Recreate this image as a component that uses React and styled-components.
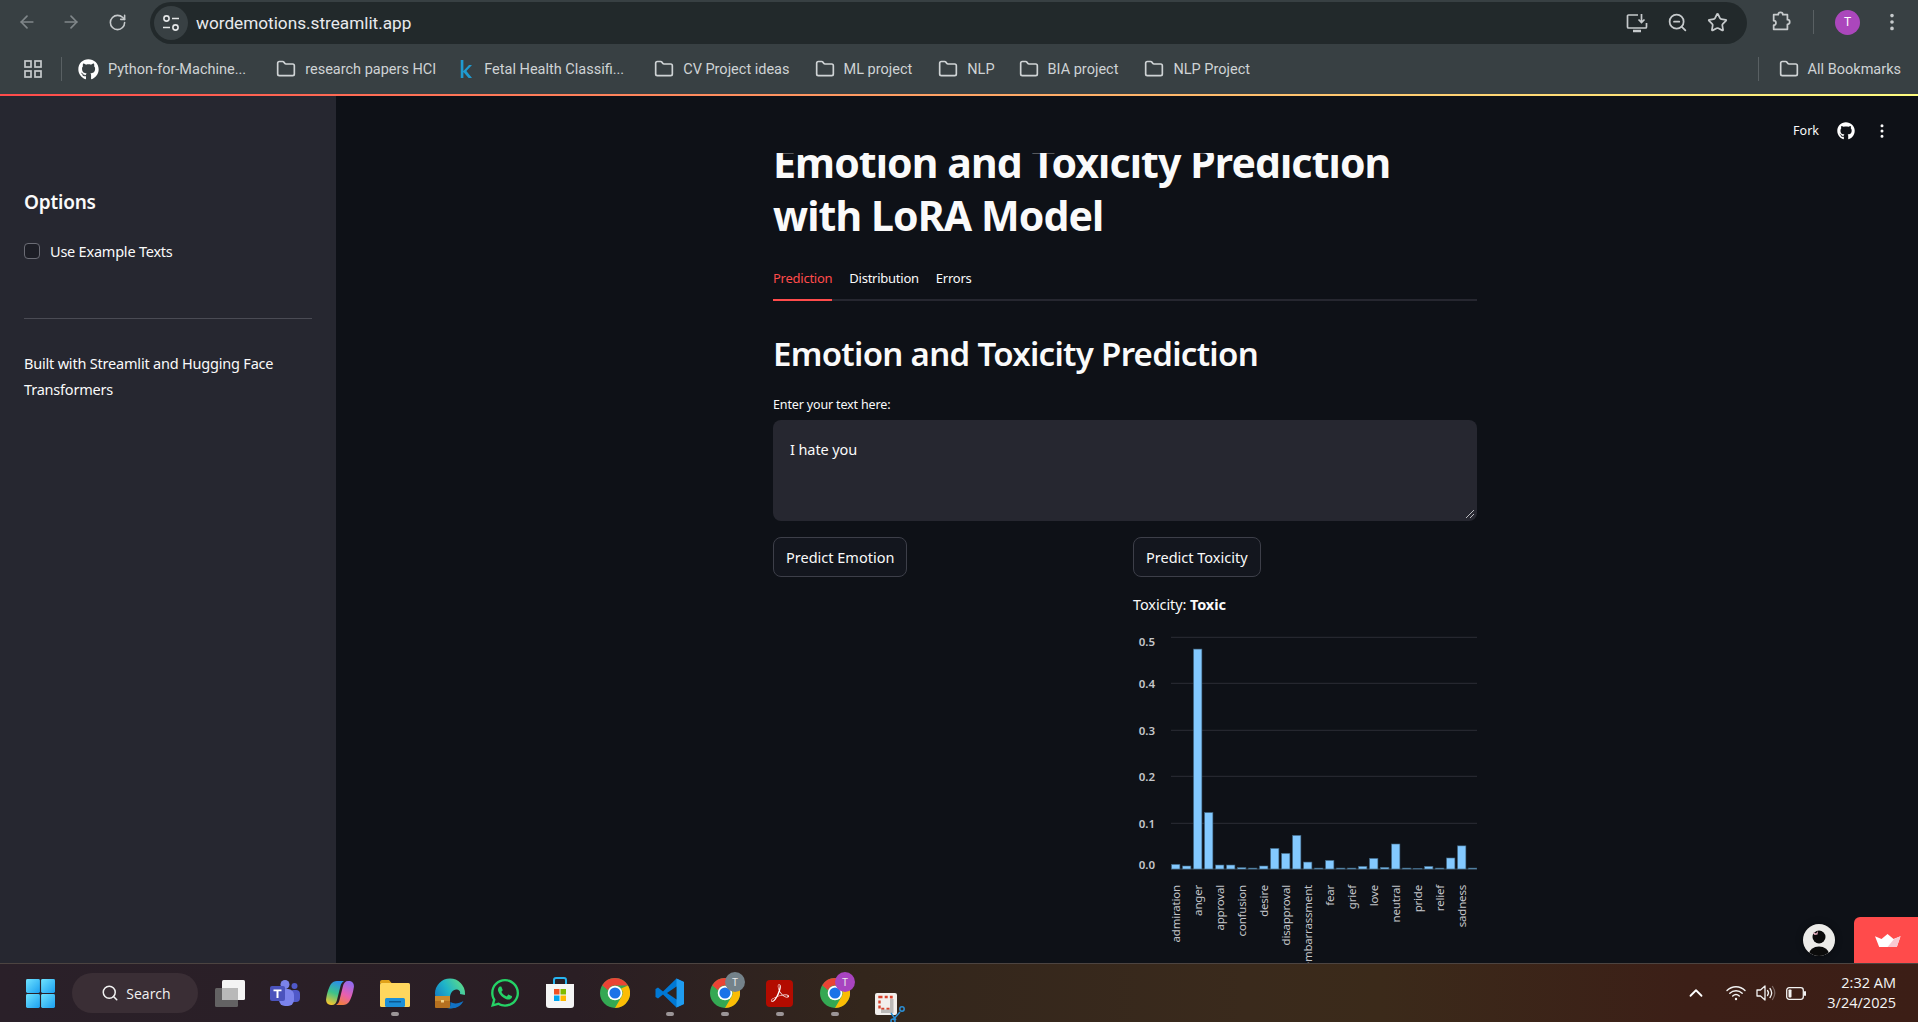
import React from "react";
import styled, { createGlobalStyle } from "styled-components";
import {
  ArrowLeft,
  ArrowRight,
  RotateCw,
  Star,
  ZoomOut,
  Folder,
  MoreVertical,
  ChevronUp,
  Search,
} from "lucide-react";
import { FaGithub, FaWhatsapp } from "react-icons/fa";
import { SiAdobeacrobatreader } from "react-icons/si";

const FONT = `"Noto Sans", "Open Sans", sans-serif`;

const GlobalStyle = createGlobalStyle`
  html, body {
    margin: 0;
    padding: 0;
    height: 100%;
    overflow: hidden;
    background: #0e1117;
    font-family: ${FONT};
  }
  * { box-sizing: border-box; }
`;

const Screen = styled.div`
  width: 1918px;
  height: 1022px;
  display: flex;
  flex-direction: column;
  overflow: hidden;
`;

/* browser chrome */
const Toolbar = styled.div`
  height: 44px;
  background: #384043;
  display: flex;
  align-items: center;
  padding-left: 15px;
  flex-shrink: 0;
`;

const NavButton = styled.div`
  width: 24px;
  height: 24px;
  margin-right: ${(p) => p.$gap || 20}px;
  display: flex;
  align-items: center;
  justify-content: center;
  color: ${(p) => (p.$dim ? "#80878a" : "#c6cacc")};
`;

const Omnibox = styled.div`
  width: 1597px;
  height: 42px;
  margin-left: 1px;
  margin-top: 1px;
  border-radius: 21px;
  background: #22292b;
  display: flex;
  align-items: center;
  padding: 0 10px 0 4px;
`;

const TuneBadge = styled.div`
  width: 34px;
  height: 34px;
  border-radius: 50%;
  background: #384043;
  display: flex;
  align-items: center;
  justify-content: center;
  margin-right: 8px;
  color: #e4e6e7;
`;

const Url = styled.span`
  font-family: "Roboto", sans-serif;
  font-size: 17.2px;
  color: #e8eaed;
  flex: 1;
`;

const OmniIcon = styled.div`
  width: 40px;
  display: flex;
  justify-content: center;
  align-items: center;
  color: #c6cacc;
`;

const ToolRight = styled.div`
  display: flex;
  align-items: center;
  margin-left: 23px;
  color: #c6cacc;
`;

const Divider = styled.div`
  width: 1px;
  height: 24px;
  background: #596063;
  margin: 0 ${(p) => p.$space || 21}px;
`;

const Avatar = styled.div`
  width: 25px;
  height: 25px;
  border-radius: 50%;
  background: #ab47bc;
  color: #fff;
  font-size: 12px;
  display: flex;
  align-items: center;
  justify-content: center;
  font-family: "Roboto", sans-serif;
`;

const MenuButton = styled.div`
  display: flex;
  margin-left: 21px;
`;

const BookmarkBar = styled.div`
  height: 50px;
  background: #384043;
  display: flex;
  align-items: center;
  padding-left: 23px;
  flex-shrink: 0;
  color: #c9cdcf;
`;

const Bookmark = styled.div`
  display: flex;
  align-items: center;
  gap: ${(p) => p.$iconGap || 9}px;
  margin-left: ${(p) => p.$lead || 0}px;
  margin-right: ${(p) => p.$after || 0}px;
  font-family: "Roboto", sans-serif;
  font-size: 14.5px;
  color: #cfd3d5;
  white-space: nowrap;
`;

const BookmarkSpacer = styled.div`
  flex: 1;
`;

const Decoration = styled.div`
  height: 2px;
  flex-shrink: 0;
  background: linear-gradient(90deg, #ff4b4b, #fffd80);
`;

/* streamlit app */
const AppBody = styled.div`
  flex: 1;
  min-height: 0;
  display: flex;
  position: relative;
`;

const Sidebar = styled.aside`
  width: 336px;
  flex-shrink: 0;
  background: #262730;
  color: #fafafa;
  padding: 92px 24px 0;
`;

const SideTitle = styled.h2`
  margin: 0;
  font-size: 19px;
  font-weight: 600;
  line-height: 28px;
  letter-spacing: -0.2px;
`;

const CheckRow = styled.label`
  display: flex;
  align-items: center;
  gap: 10px;
  margin-top: 25px;
  font-size: 14.5px;
  line-height: 20px;
  letter-spacing: -0.22px;
`;

const CheckBox = styled.span`
  width: 16px;
  height: 16px;
  border-radius: 4px;
  border: 1px solid #6b6c75;
  background: #1d1e26;
`;

const SideRule = styled.hr`
  border: 0;
  border-top: 1px solid #4a4b54;
  margin: 57px 0 31px;
`;

const SideNote = styled.p`
  margin: 0;
  font-size: 14.5px;
  line-height: 26px;
  letter-spacing: -0.2px;
`;

const Main = styled.main`
  flex: 1;
  min-width: 0;
  position: relative;
  overflow: hidden;
  background: #0e1117;
  color: #fafafa;
  padding: 40px 441px 0 437px;
`;

const Header = styled.header`
  position: absolute;
  left: 0;
  right: 0;
  top: 0;
  height: 57px;
  background: #0e1117;
  display: flex;
  align-items: center;
  justify-content: flex-end;
  padding: 12px 27px 0 0;
  gap: 18px;
  font-size: 12.5px;
`;

const Title = styled.h1`
  margin: 0;
  font-size: 41px;
  line-height: 53px;
  font-weight: 700;
  letter-spacing: -0.9px;
`;

const Tabs = styled.div`
  display: flex;
  gap: 17px;
  margin-top: 19px;
  height: 40px;
  border-bottom: 2px solid #262730;
`;

const Tab = styled.div`
  height: 40px;
  line-height: 34px;
  font-size: 13px;
  letter-spacing: -0.25px;
  color: ${(p) => (p.$active ? "#ff4b4b" : "#fafafa")};
  border-bottom: ${(p) => (p.$active ? "2px solid #ff4b4b" : "0")};
`;

const SectionTitle = styled.h2`
  margin: 30px 0 0;
  font-size: 33px;
  line-height: 46px;
  font-weight: 600;
  letter-spacing: -0.7px;
`;

const FieldLabel = styled.label`
  display: block;
  margin-top: 19px;
  font-size: 12.5px;
  line-height: 18px;
  letter-spacing: -0.15px;
`;

const TextBox = styled.div`
  position: relative;
  margin-top: 6px;
  height: 101px;
  border-radius: 8px;
  background: #262730;
  padding: 16px 17px;
  font-size: 14.5px;
  line-height: 26px;
  letter-spacing: -0.1px;
`;

const ResizeGrip = styled.svg`
  position: absolute;
  right: 2px;
  bottom: 2px;
`;

const Columns = styled.div`
  display: grid;
  grid-template-columns: 344px 344px;
  gap: 16px;
  margin-top: 16px;
`;

const Column = styled.div`
  min-width: 0;
`;

const Button = styled.button`
  display: block;
  height: 40px;
  padding: 0 12px;
  background: #13161e;
  border: 1px solid #3d3f49;
  border-radius: 8px;
  color: #fafafa;
  font-family: ${FONT};
  font-size: 14.5px;
`;

const Verdict = styled.p`
  margin: 15px 0 0;
  font-size: 14.5px;
  line-height: 24px;
  letter-spacing: -0.1px;

  strong {
    font-weight: 700;
  }
`;

const ChartSvg = styled.svg`
  display: block;
  margin-top: 9px;
  font-family: ${FONT};
`;

/* floating streamlit widgets */
const ProfileBubble = styled.div`
  position: absolute;
  right: 83px;
  bottom: 7px;
  width: 32px;
  height: 32px;
  border-radius: 50%;
  overflow: hidden;
  box-shadow: 0 0 6px rgba(0, 0, 0, 0.5);
`;

const HostBadge = styled.div`
  position: absolute;
  right: 0;
  bottom: 0;
  width: 64px;
  height: 46px;
  padding-left: 3px;
  background: #ff4b4b;
  border-top-left-radius: 6px;
  display: flex;
  align-items: center;
  justify-content: center;
`;

/* windows taskbar */
const Taskbar = styled.footer`
  height: 59px;
  flex-shrink: 0;
  border-top: 1px solid #4c4441;
  background: linear-gradient(90deg, #2a2029 0%, #2a1e24 30%, #33261c 45%, #3a2a1c 65%, #3b2a1a 72%, #3c1f17 88%, #3c1e16 100%);
  display: flex;
  align-items: center;
  padding: 0 22px 0 18px;
  color: #fff;
`;

const StartButton = styled.div`
  width: 44px;
  height: 44px;
  display: flex;
  align-items: center;
  justify-content: center;
`;

const SearchPill = styled.div`
  width: 126px;
  height: 40px;
  margin: 0 4px 0 10px;
  padding-left: 2px;
  border-radius: 20px;
  background: #3a2e35;
  display: flex;
  align-items: center;
  justify-content: center;
  gap: 7px;
  font-family: "Open Sans", sans-serif;
  font-size: 14px;
  color: #f2f2f2;
`;

const AppSlot = styled.div`
  position: relative;
  width: 55px;
  height: 44px;
  display: flex;
  align-items: center;
  justify-content: center;

  &::after {
    content: "";
    display: ${(p) => (p.$running ? "block" : "none")};
    position: absolute;
    left: 24px;
    bottom: -1px;
    width: 8px;
    height: 4px;
    border-radius: 2px;
    background: #9b9597;
  }
`;

const UserDot = styled.span`
  position: absolute;
  left: 28px;
  top: 1px;
  width: 20px;
  height: 20px;
  border-radius: 50%;
  background: ${(p) => p.$color};
  color: #e9e9e9;
  font-family: "Roboto", sans-serif;
  font-size: 10px;
  display: flex;
  align-items: center;
  justify-content: center;
`;

const AcrobatTile = styled.div`
  width: 27px;
  height: 27px;
  border-radius: 4px;
  background: #b30b00;
  display: flex;
  align-items: center;
  justify-content: center;
`;

const SnipHolder = styled.div`
  display: flex;
  margin-top: 30px;
  margin-left: 1px;
`;

const Tray = styled.div`
  margin-left: auto;
  display: flex;
  align-items: center;
`;

const TrayIcon = styled.div`
  display: flex;
  align-items: center;
  margin-right: ${(p) => p.$after || 0}px;
`;

const Clock = styled.div`
  width: 70px;
  margin-left: 20px;
  text-align: right;
  font-family: "Open Sans", sans-serif;
  font-size: 14.5px;
  line-height: 20px;
  color: #f5f5f5;
`;

/* drawn icons */
const TuneIcon = () => (
  <svg width="20" height="20" viewBox="0 0 20 20" fill="none" stroke="currentColor" strokeWidth="1.6">
    <circle cx="5.5" cy="5.5" r="2.6" />
    <path d="M11 5.5h7M2 14.5h7" />
    <circle cx="14.5" cy="14.5" r="2.6" />
  </svg>
);

const InstallIcon = () => (
  <svg width="22" height="20" viewBox="0 0 22 20" fill="none" stroke="currentColor" strokeWidth="1.7">
    <path d="M12 2H2.500a1 1 0 00-1 1v11a1 1 0 001 1h17a1 1 0 001-1v-4" />
    <path d="M15.500 1v8M12.500 6.500l3 3 3-3" />
    <path d="M7 18h8" strokeWidth="2.500" />
  </svg>
);

const PuzzleIcon = () => (
  <svg width="22" height="22" viewBox="0 0 24 24" fill="none" stroke="currentColor" strokeWidth="1.9" strokeLinejoin="round">
    <path d="M4 4h5a2.500 2.500 0 0 1 5 0h5v5.500a2.500 2.500 0 0 1 0 5V20H4v-4.500a2.500 2.500 0 0 0 0-5z" />
  </svg>
);

const KaggleMark = () => (
  <svg width="12" height="18" viewBox="0 0 16 24" fill="#1f9bd1">
    <path d="M1 0h3.500v14.500L12 6.500h4l-7.500 8L16 24h-4.500L4.500 16 4.500 24H1z" />
  </svg>
);

const AppsIcon = () => (
  <svg width="20" height="20" viewBox="0 0 20 20" fill="none" stroke="#c6cacc" strokeWidth="1.7">
    <rect x="2" y="2" width="6" height="6" />
    <rect x="12" y="2" width="6" height="6" />
    <rect x="2" y="12" width="6" height="6" />
    <rect x="12" y="12" width="6" height="6" />
  </svg>
);

const WindowsLogo = () => (
  <svg width="29" height="29" viewBox="0 0 30 30">
    <defs>
      <linearGradient id="winGrad" x1="0" y1="0" x2="1" y2="1">
        <stop offset="0" stopColor="#6fe3ff" />
        <stop offset="1" stopColor="#1b9ff0" />
      </linearGradient>
    </defs>
    <rect x="0" y="0" width="14.4" height="14.4" rx="1.5" fill="url(#winGrad)" />
    <rect x="15.6" y="0" width="14.4" height="14.4" rx="1.5" fill="url(#winGrad)" />
    <rect x="0" y="15.6" width="14.4" height="14.4" rx="1.5" fill="url(#winGrad)" />
    <rect x="15.6" y="15.6" width="14.4" height="14.4" rx="1.5" fill="url(#winGrad)" />
  </svg>
);

const TaskViewIcon = () => (
  <svg width="30" height="27" viewBox="0 0 30 27">
    <rect x="7" y="0" width="23" height="20" rx="1.5" fill="#f4f4f4" />
    <rect x="0" y="8" width="23" height="19" rx="1.5" fill="#666" fillOpacity="0.95" />
    <rect x="7" y="8" width="16" height="12" fill="#b9b9b9" />
  </svg>
);

const TeamsIcon = () => (
  <svg width="30" height="26" viewBox="0 0 30 26">
    <circle cx="15" cy="4.500" r="4.500" fill="#7b83eb" />
    <circle cx="24.500" cy="6" r="3" fill="#5059c9" />
    <rect x="20" y="10" width="10" height="12" rx="4" fill="#5059c9" />
    <rect x="9" y="9" width="15" height="17" rx="6" fill="#7b83eb" />
    <rect x="0" y="6" width="15" height="15" rx="2" fill="#4b53bc" />
    <path d="M3.500 9.500h8v1.800h-3V18h-2v-6.700h-3z" fill="#fff" />
  </svg>
);

const CopilotIcon = () => (
  <svg width="28" height="24" viewBox="0 0 28 24">
    <defs>
      <linearGradient id="copA" x1="0.6" y1="0" x2="0.3" y2="1">
        <stop offset="0" stopColor="#2a8fe8" />
        <stop offset="0.5" stopColor="#3cc48a" />
        <stop offset="1" stopColor="#f6c62e" />
      </linearGradient>
      <linearGradient id="copB" x1="0.3" y1="1" x2="0.7" y2="0">
        <stop offset="0" stopColor="#f0803c" />
        <stop offset="0.45" stopColor="#e85fb0" />
        <stop offset="1" stopColor="#8f6bf0" />
      </linearGradient>
    </defs>
    <path d="M11 0h7c-2 1-3 3-3.500 5L11 19c-.6 3-2.500 5-5 5H5c-3.500 0-5.500-3-4.800-6.500C1 12 3 6 5 3c1.500-2 3.500-3 6-3z" fill="url(#copA)" />
    <path d="M17 24h-7c2-1 3-3 3.500-5L17 5c.6-3 2.500-5 5-5h1c3.500 0 5.500 3 4.800 6.500C27 12 25 18 23 21c-1.500 2-3.500 3-6 3z" fill="url(#copB)" />
  </svg>
);

const ExplorerIcon = () => (
  <svg width="30" height="27" viewBox="0 0 30 27">
    <path d="M0 2a2 2 0 012-2h7l3 3.500H0z" fill="#e0a21a" />
    <rect x="0" y="3" width="30" height="24" rx="1.500" fill="#ffd75e" />
    <rect x="5" y="18" width="20" height="9" rx="1.500" fill="#1b8fd8" />
    <rect x="9" y="21" width="12" height="1.500" fill="#0a5a94" />
  </svg>
);

const EdgeIcon = () => (
  <svg width="30" height="31" viewBox="0 0 30 31">
    <defs>
      <linearGradient id="edgeA" x1="1" y1="0.2" x2="0" y2="0.8">
        <stop offset="0" stopColor="#5fdc86" />
        <stop offset="0.5" stopColor="#1fb4c8" />
        <stop offset="1" stopColor="#1272c4" />
      </linearGradient>
    </defs>
    <circle cx="15" cy="15.500" r="15" fill="url(#edgeA)" />
    <path d="M15 20c0-5 3-9 7-8.500 3 .4 3.500 3 3 4.500L30 17v5c-3 5-9 7-15 6z" fill="#2a1e24" />
    <path d="M15 30c6 1 11-2 13.500-7-5 3-10 3-13 1z" fill="#1272c4" />
    <rect x="0" y="18" width="15" height="12" rx="1" fill="#b5701f" />
    <rect x="0" y="18" width="15" height="5" fill="#c98a2e" />
    <rect x="6" y="22" width="3" height="2.500" fill="#f3d083" />
  </svg>
);

const StoreIcon = () => (
  <svg width="30" height="32" viewBox="0 0 30 32">
    <path d="M9 7V3a2 2 0 012-2h8a2 2 0 012 2v4" fill="none" stroke="#27b4f0" strokeWidth="2" />
    <path d="M1 7h28v21a3 3 0 01-3 3H4a3 3 0 01-3-3z" fill="#f5f5f5" />
    <rect x="9" y="12" width="5.5" height="5.500" fill="#f25022" />
    <rect x="15.500" y="12" width="5.500" height="5.500" fill="#7fba00" />
    <rect x="9" y="18.500" width="5.500" height="5.500" fill="#00a4ef" />
    <rect x="15.500" y="18.500" width="5.500" height="5.500" fill="#ffb900" />
  </svg>
);

const ChromeIcon = () => (
  <svg width="30" height="30" viewBox="0 0 30 30">
    <circle cx="15" cy="15" r="15" fill="#34a853" />
    <path d="M15 0a15 15 0 0113 7.500H15a7.500 7.500 0 00-7 4.700L2.200 7.300A15 15 0 0115 0z" fill="#ea4335" />
    <path d="M28 7.500A15 15 0 0115 30l6.500-11.200A7.500 7.500 0 0021 10.500z" fill="#fbbc05" />
    <circle cx="15" cy="15" r="7.300" fill="#fff" />
    <circle cx="15" cy="15" r="5.600" fill="#1a73e8" />
  </svg>
);

const VsCodeIcon = () => (
  <svg width="30" height="30" viewBox="0 0 30 30">
    <path d="M21.500 0.500L29 4v22l-7.500 3.500L8 16.500 3 20.500 0.500 19V11L3 9.500l5 4z" fill="#0078d4" />
    <path d="M21.500 0.500L29 4v22l-7.500 3.500z" fill="#1f9cf0" />
    <path d="M21.500 8.500L12 15l9.500 6.500z" fill="#2f2420" />
  </svg>
);

const SnipIcon = () => (
  <svg width="30" height="30" viewBox="0 0 30 30">
    <rect x="0" y="0" width="22" height="22" rx="2" fill="#f2efec" />
    <rect x="4.500" y="4" width="12" height="12" fill="none" stroke="#d8402a" strokeWidth="2.400" strokeDasharray="3 2.200" />
    <path d="M15 6h3.500v14H6v-3.500h9z" fill="#bcbab8" />
    <path d="M18 27l7-8M21 27l-5-7" stroke="#2b8fd6" strokeWidth="1.500" fill="none" />
    <circle cx="27" cy="16" r="2.200" fill="none" stroke="#2b8fd6" strokeWidth="1.500" />
    <circle cx="18" cy="28" r="2" fill="none" stroke="#2b8fd6" strokeWidth="1.500" />
  </svg>
);

const WifiIcon = () => (
  <svg width="20" height="16" viewBox="0 0 20 16" fill="none" stroke="#f2f2f2" strokeWidth="1.400" strokeLinecap="round">
    <path d="M1 5.500c5-5 13-5 18 0" />
    <path d="M3.800 8.300c3.500-3.400 9-3.400 12.400 0" />
    <path d="M6.700 11c1.900-1.800 4.700-1.800 6.600 0" />
    <circle cx="10" cy="14" r="1.200" fill="#f2f2f2" stroke="none" />
  </svg>
);

const VolumeIcon = () => (
  <svg width="20" height="18" viewBox="0 0 20 18" fill="none" stroke="#f2f2f2" strokeWidth="1.300" strokeLinejoin="round" strokeLinecap="round">
    <path d="M1 6h3.500L9 2v14l-4.500-4H1z" />
    <path d="M11.500 6.500c1.200 1.500 1.200 3.500 0 5" />
    <path d="M14 4.500c2 2.700 2 6.300 0 9" />
    <path d="M16.500 2.500c2.800 4 2.800 9 0 13" stroke="#7a6660" />
  </svg>
);

const BatteryIcon = () => (
  <svg width="20" height="13" viewBox="0 0 20 13" fill="none">
    <rect x="0.700" y="0.700" width="16.600" height="11.600" rx="2.500" stroke="#f2f2f2" strokeWidth="1.300" />
    <rect x="2.500" y="2.500" width="3" height="8" rx="0.800" fill="#f2f2f2" />
    <rect x="18" y="4" width="2" height="5" rx="1" fill="#f2f2f2" />
  </svg>
);

const ProfileIcon = () => (
  <svg width="32" height="32" viewBox="0 0 32 32">
    <rect width="32" height="32" fill="#ecebe8" />
    <circle cx="16" cy="13" r="6.500" fill="#0b0b0b" />
    <ellipse cx="16" cy="30" rx="10" ry="7.500" fill="#0b0b0b" />
    <path d="M10 8l3 1.500L15 7l-.5 3.500L11.500 11z" fill="#eeb4c6" />
  </svg>
);

const CrownIcon = () => (
  <svg width="26" height="13" viewBox="0 0 28 14">
    <path d="M0 2.500l7 3L13.500 0 20 5.500l7.500-3-4 11.500H4.500z" fill="#fff" />
    <path d="M13.500 14l7-8.500 7-3-4 11.500z" fill="#f9c9d2" />
  </svg>
);

/* chart data */
const SCORES = [
  0.01, 0.0065, 0.475, 0.122, 0.0086, 0.0086, 0.003, 0.002, 0.0065, 0.0446,
  0.0338, 0.0727, 0.015, 0.002, 0.0187, 0.002, 0.002, 0.0058, 0.023, 0.0036,
  0.054, 0.002, 0.0015, 0.0058, 0.002, 0.0238, 0.05, 0.002,
];

const AXIS_LABELS = [
  "admiration", "anger", "approval", "confusion", "desire", "disapproval",
  "embarrassment", "fear", "grief", "love", "neutral", "pride", "relief", "sadness",
];

const Y_TICKS = [
  { label: "0.5", grid: 12.3, text: 21 },
  { label: "0.4", grid: 58.3, text: 63 },
  { label: "0.3", grid: 105.3, text: 109.500 },
  { label: "0.2", grid: 151.3, text: 155.500 },
  { label: "0.1", grid: 198.3, text: 202.500 },
  { label: "0.0", grid: 244, text: 243.500 },
];

const Chart = () => {
  const base = 244;
  const pxPerUnit = 463;
  return (
    <ChartSvg width="344" height="340" viewBox="0 0 344 340">
      {Y_TICKS.map((t) => (
        <g key={t.label}>
          <line x1="38" x2="344" y1={t.grid} y2={t.grid} stroke={t.label === "0.0" ? "#3a4a58" : "#2c2e36"} strokeWidth="1" />
          <text x="22" y={t.text} fontSize="11.5" fontWeight="600" fill="#c4c6ca" textAnchor="end">
            {t.label}
          </text>
        </g>
      ))}
      {SCORES.map((s, i) => {
        const h = s * pxPerUnit;
        return (
          <rect
            key={i}
            x={38.5 + i * 11}
            y={base - h}
            width="8.4"
            height={h}
            fill="#83c9ff"
            stroke="#3d627d"
            strokeWidth="0.6"
          />
        );
      })}
      {AXIS_LABELS.map((label, i) => {
        const x = 47 + i * 22;
        return (
          <text
            key={label}
            transform={`translate(${x} 260) rotate(-90)`}
            fontSize="11.5"
            letterSpacing="-0.2"
            fill="#c4c6ca"
            textAnchor="end"
          >
            {label}
          </text>
        );
      })}
    </ChartSvg>
  );
};

const BOOKMARKS = [
  { name: "research papers HCI", after: 24 },
  { name: "Fetal Health Classifi...", kaggle: true, after: 30 },
  { name: "CV Project ideas", after: 25 },
  { name: "ML project", after: 26 },
  { name: "NLP", after: 24 },
  { name: "BIA project", after: 26 },
  { name: "NLP Project", after: 0 },
];

const TASK_APPS = [
  { id: "view", icon: <TaskViewIcon /> },
  { id: "teams", icon: <TeamsIcon /> },
  { id: "copilot", icon: <CopilotIcon /> },
  { id: "explorer", icon: <ExplorerIcon />, running: true },
  { id: "edge", icon: <EdgeIcon /> },
  { id: "whatsapp", icon: <FaWhatsapp size={32} color="#25d366" /> },
  { id: "store", icon: <StoreIcon /> },
  { id: "chrome", icon: <ChromeIcon /> },
  { id: "vscode", icon: <VsCodeIcon />, running: true },
  { id: "chrome-t1", icon: <ChromeIcon />, running: true, user: "#74828a" },
  {
    id: "acrobat",
    icon: (
      <AcrobatTile>
        <SiAdobeacrobatreader size={18} color="#fff" />
      </AcrobatTile>
    ),
    running: true,
  },
  { id: "chrome-t2", icon: <ChromeIcon />, running: true, user: "#a844c0" },
  {
    id: "snip",
    icon: (
      <SnipHolder>
        <SnipIcon />
      </SnipHolder>
    ),
  },
];

const App = () => {
  return (
    <Screen>
      <GlobalStyle />
      <Toolbar>
        <NavButton $dim $gap={20}><ArrowLeft size={20} /></NavButton>
        <NavButton $dim $gap={22}><ArrowRight size={20} /></NavButton>
        <NavButton $gap={20}><RotateCw size={19} /></NavButton>
        <Omnibox>
          <TuneBadge><TuneIcon /></TuneBadge>
          <Url>wordemotions.streamlit.app</Url>
          <OmniIcon><InstallIcon /></OmniIcon>
          <OmniIcon><ZoomOut size={21} /></OmniIcon>
          <OmniIcon><Star size={21} /></OmniIcon>
        </Omnibox>
        <ToolRight>
          <PuzzleIcon />
          <Divider />
          <Avatar>T</Avatar>
          <MenuButton><MoreVertical size={22} /></MenuButton>
        </ToolRight>
      </Toolbar>

      <BookmarkBar>
        <AppsIcon />
        <Divider $space={18} />
        <Bookmark $lead={-2} $after={30}>
          <FaGithub size={21} color="#fff" />
          Python-for-Machine...
        </Bookmark>
        {BOOKMARKS.map((b) => (
          <Bookmark key={b.name} $after={b.after} $iconGap={b.kaggle ? 12 : 9}>
            {b.kaggle ? <KaggleMark /> : <Folder size={20} />}
            {b.name}
          </Bookmark>
        ))}
        <BookmarkSpacer />
        <Divider $space={20} />
        <Bookmark $after={17}>
          <Folder size={20} />
          All Bookmarks
        </Bookmark>
      </BookmarkBar>
      <Decoration />

      <AppBody>
        <Sidebar>
          <SideTitle>Options</SideTitle>
          <CheckRow>
            <CheckBox />
            Use Example Texts
          </CheckRow>
          <SideRule />
          <SideNote>
            Built with Streamlit and Hugging Face
            <br />
            Transformers
          </SideNote>
        </Sidebar>

        <Main>
          <Title>
            Emotion and Toxicity Prediction
            <br />
            with LoRA Model
          </Title>
          <Tabs>
            <Tab $active>Prediction</Tab>
            <Tab>Distribution</Tab>
            <Tab>Errors</Tab>
          </Tabs>
          <SectionTitle>Emotion and Toxicity Prediction</SectionTitle>
          <FieldLabel>Enter your text here:</FieldLabel>
          <TextBox>
            I hate you
            <ResizeGrip width="10" height="10" viewBox="0 0 10 10" stroke="#b8b9bd" strokeWidth="1">
              <path d="M1 9L9 1M5 9L9 5" />
            </ResizeGrip>
          </TextBox>
          <Columns>
            <Column>
              <Button>Predict Emotion</Button>
            </Column>
            <Column>
              <Button>Predict Toxicity</Button>
              <Verdict>
                Toxicity: <strong>Toxic</strong>
              </Verdict>
              <Chart />
            </Column>
          </Columns>
          <Header>
            Fork
            <FaGithub size={18} color="#fff" />
            <MoreVertical size={18} />
          </Header>
        </Main>

        <ProfileBubble><ProfileIcon /></ProfileBubble>
        <HostBadge><CrownIcon /></HostBadge>
      </AppBody>

      <Taskbar>
        <StartButton><WindowsLogo /></StartButton>
        <SearchPill>
          <Search size={18} />
          Search
        </SearchPill>
        {TASK_APPS.map((a) => (
          <AppSlot key={a.id} $running={a.running}>
            {a.icon}
            {a.user && <UserDot $color={a.user}>T</UserDot>}
          </AppSlot>
        ))}
        <Tray>
          <TrayIcon $after={19}><ChevronUp size={22} /></TrayIcon>
          <TrayIcon $after={10}><WifiIcon /></TrayIcon>
          <TrayIcon $after={10}><VolumeIcon /></TrayIcon>
          <TrayIcon><BatteryIcon /></TrayIcon>
          <Clock>
            2:32 AM
            <br />
            3/24/2025
          </Clock>
        </Tray>
      </Taskbar>
    </Screen>
  );
};

export default App;
